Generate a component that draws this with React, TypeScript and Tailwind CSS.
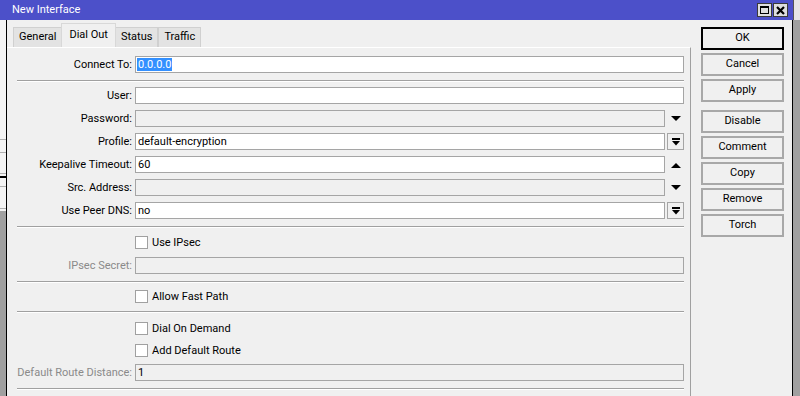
import React from "react";

const FONT = { fontFamily: "Roboto, 'Liberation Sans', Arial, sans-serif" };

// small triangle icons used by the combo boxes
function ArrowDown() {
  return (
    <svg width="10" height="6" viewBox="0 0 10 6">
      <path d="M0 0 H10 L5 5 Z" fill="#000" />
    </svg>
  );
}

function ArrowUp() {
  return (
    <svg width="10" height="6" viewBox="0 0 10 6">
      <path d="M0 6 H10 L5 1 Z" fill="#000" />
    </svg>
  );
}

function DropBox() {
  return (
    <div className="w-[17px] h-[17px] border border-[#a5a5a5] bg-[#f0f0f0] flex items-center justify-center">
      <svg width="8" height="8" viewBox="0 0 8 8">
        <rect x="0" y="0" width="8" height="2" fill="#000" />
        <path d="M0 3 H8 L4 7.5 Z" fill="#000" />
      </svg>
    </div>
  );
}

function Separator() {
  return <div className="ml-[10px] w-[667px] h-[2px] border-t border-[#a0a0a0] border-b border-b-white" />;
}

function Row({
  label,
  value,
  disabled,
  labelGray,
  tail,
  selected,
  className = "",
}: {
  label: string;
  value?: string;
  disabled?: boolean;
  labelGray?: boolean;
  tail?: "down" | "up" | "box";
  selected?: boolean;
  className?: string;
}) {
  return (
    <div className={`flex items-center h-[17px] ${className}`}>
      <div
        className={`w-[125px] text-right leading-[17px] whitespace-nowrap ${
          labelGray ? "text-[#8a8a8a]" : "text-black"
        }`}
      >
        {label}
      </div>
      <div className="ml-[3px] w-[549px] flex items-center gap-[2px]">
        <div
          className={`flex-1 h-[17px] border border-[#a5a5a5] flex items-center pl-[1px] ${
            disabled ? "bg-[#f0f0f0]" : "bg-white"
          }`}
        >
          {value && (
            <span
              className={`leading-[13px] px-[1px] ${
                selected ? "bg-[#3390ff] text-white" : "text-black"
              }`}
            >
              {value}
            </span>
          )}
        </div>
        {tail && (
          <div className="w-[17px] h-[17px] flex items-center justify-center">
            {tail === "down" && <ArrowDown />}
            {tail === "up" && <ArrowUp />}
            {tail === "box" && <DropBox />}
          </div>
        )}
      </div>
    </div>
  );
}

function Check({ label, className = "" }: { label: string; className?: string }) {
  return (
    <div className={`flex items-center h-[13px] ${className}`}>
      <div className="ml-[128px] w-[13px] h-[13px] border border-[#a0a0a0] bg-white" />
      <span className="ml-[4px] leading-[13px] text-black">{label}</span>
    </div>
  );
}

function Tab({ label, active }: { label: string; active?: boolean }) {
  if (active) {
    return (
      <div className="h-[24px] px-[7px] bg-[#f0f0f0] border border-b-0 border-[#d8d8d8] flex items-start pt-[3px] text-black -mx-[1px] z-10">
        {label}
      </div>
    );
  }
  return (
    <div className="h-[20px] px-[5px] bg-[#e3e3e3] border border-b-0 border-[#d0d0d0] flex items-center text-black">
      {label}
    </div>
  );
}

const BUTTONS = ["Disable", "Comment", "Copy", "Remove", "Torch"];

function Btn({ label, focused, className = "" }: { label: string; focused?: boolean; className?: string }) {
  return (
    <div
      className={`w-[83px] h-[23px] flex items-center justify-center bg-[#f0f0f0] text-black ${
        focused ? "border-2 border-black" : "border-2 border-[#a8a8a8]"
      } ${className}`}
    >
      {label}
    </div>
  );
}

export default function App() {
  return (
    <div className="w-[800px] h-[396px] overflow-hidden bg-[#f0f0f0] flex flex-col text-[11px]" style={FONT}>
      {/* Title bar */}
      <div className="h-[20px] flex shrink-0">
        <div className="w-[793px] bg-[#4c50c9] flex items-center pl-[12px] pr-[5px]">
          <span className="text-white text-[11px] flex-1">New Interface</span>
          <div className="w-[15px] h-[14px] bg-[#dedede] border border-[#3a3a3a] flex items-center justify-center">
            <div className="w-[9px] h-[8px] border border-black border-t-2" />
          </div>
          <div className="ml-[1px] w-[15px] h-[14px] bg-[#dedede] border border-[#3a3a3a] flex items-center justify-center">
            <svg width="9" height="9" viewBox="0 0 9 9">
              <path d="M1 1 L8 8 M8 1 L1 8" stroke="#000" strokeWidth="2.2" />
            </svg>
          </div>
        </div>
        <div className="flex-1 bg-[#e6e6e6] border-l border-[#555]" />
      </div>

      <div className="flex flex-1 min-h-0">
        {/* background window peeking out on the left */}
        <div className="w-[6px] flex flex-col bg-[#f4f4f4]">
          <div className="h-[119px]" />
          <div className="h-[1px] bg-[#b0b0b0]" />
          <div className="h-[12px]" />
          <div className="h-[1px] bg-[#b0b0b0]" />
          <div className="h-[20px]" />
          <div className="h-[1px] bg-[#b0b0b0]" />
          <div className="h-[2px]" />
          <div className="h-[2px] bg-black" />
          <div className="h-[8px]" />
          <div className="h-[1px] bg-[#b0b0b0]" />
          <div className="h-[21px]" />
          <div className="h-[1px] bg-[#b0b0b0]" />
          <div className="h-[2px]" />
          <div className="flex-1 bg-[#a0a0a0]" />
        </div>

        {/* the dialog */}
        <div className="w-[787px] border-l border-r border-black flex">
          <div className="w-[684px] flex flex-col">
            <div className="h-[27px] flex items-end pl-[6px] shrink-0">
              <Tab label="General" />
              <Tab label="Dial Out" active />
              <Tab label="Status" />
              <Tab label="Traffic" />
            </div>
            <div className="flex-1 border-t border-white border-r border-r-[#a0a0a0] flex flex-col">
              <Row label="Connect To:" value="0.0.0.0" selected className="mt-[8px]" />
              <div className="mt-[7px]">
                <Separator />
              </div>
              <Row label="User:" className="mt-[5px]" />
              <Row label="Password:" disabled tail="down" className="mt-[6px]" />
              <Row label="Profile:" value="default-encryption" tail="box" className="mt-[6px]" />
              <Row label="Keepalive Timeout:" value="60" tail="up" className="mt-[6px]" />
              <Row label="Src. Address:" disabled tail="down" className="mt-[6px]" />
              <Row label="Use Peer DNS:" value="no" tail="box" className="mt-[6px]" />
              <div className="mt-[7px]">
                <Separator />
              </div>
              <Check label="Use IPsec" className="mt-[8px]" />
              <Row label="IPsec Secret:" disabled labelGray className="mt-[8px]" />
              <div className="mt-[7px]">
                <Separator />
              </div>
              <Check label="Allow Fast Path" className="mt-[7px]" />
              <div className="mt-[8px]">
                <Separator />
              </div>
              <Check label="Dial On Demand" className="mt-[9px]" />
              <Check label="Add Default Route" className="mt-[9px]" />
              <Row label="Default Route Distance:" value="1" disabled labelGray className="mt-[7px]" />
              <div className="mt-[7px]">
                <Separator />
              </div>
            </div>
          </div>

          {/* buttons */}
          <div className="flex-1 flex flex-col pl-[10px] pt-[7px]">
            <Btn label="OK" focused />
            <Btn label="Cancel" className="mt-[3px]" />
            <Btn label="Apply" className="mt-[3px]" />
            <div className="mt-[8px] flex flex-col gap-[3px]">
              {BUTTONS.map((b) => (
                <Btn key={b} label={b} />
              ))}
            </div>
          </div>
        </div>

        <div className="flex-1 bg-[#a0a0a0]" />
      </div>
    </div>
  );
}
